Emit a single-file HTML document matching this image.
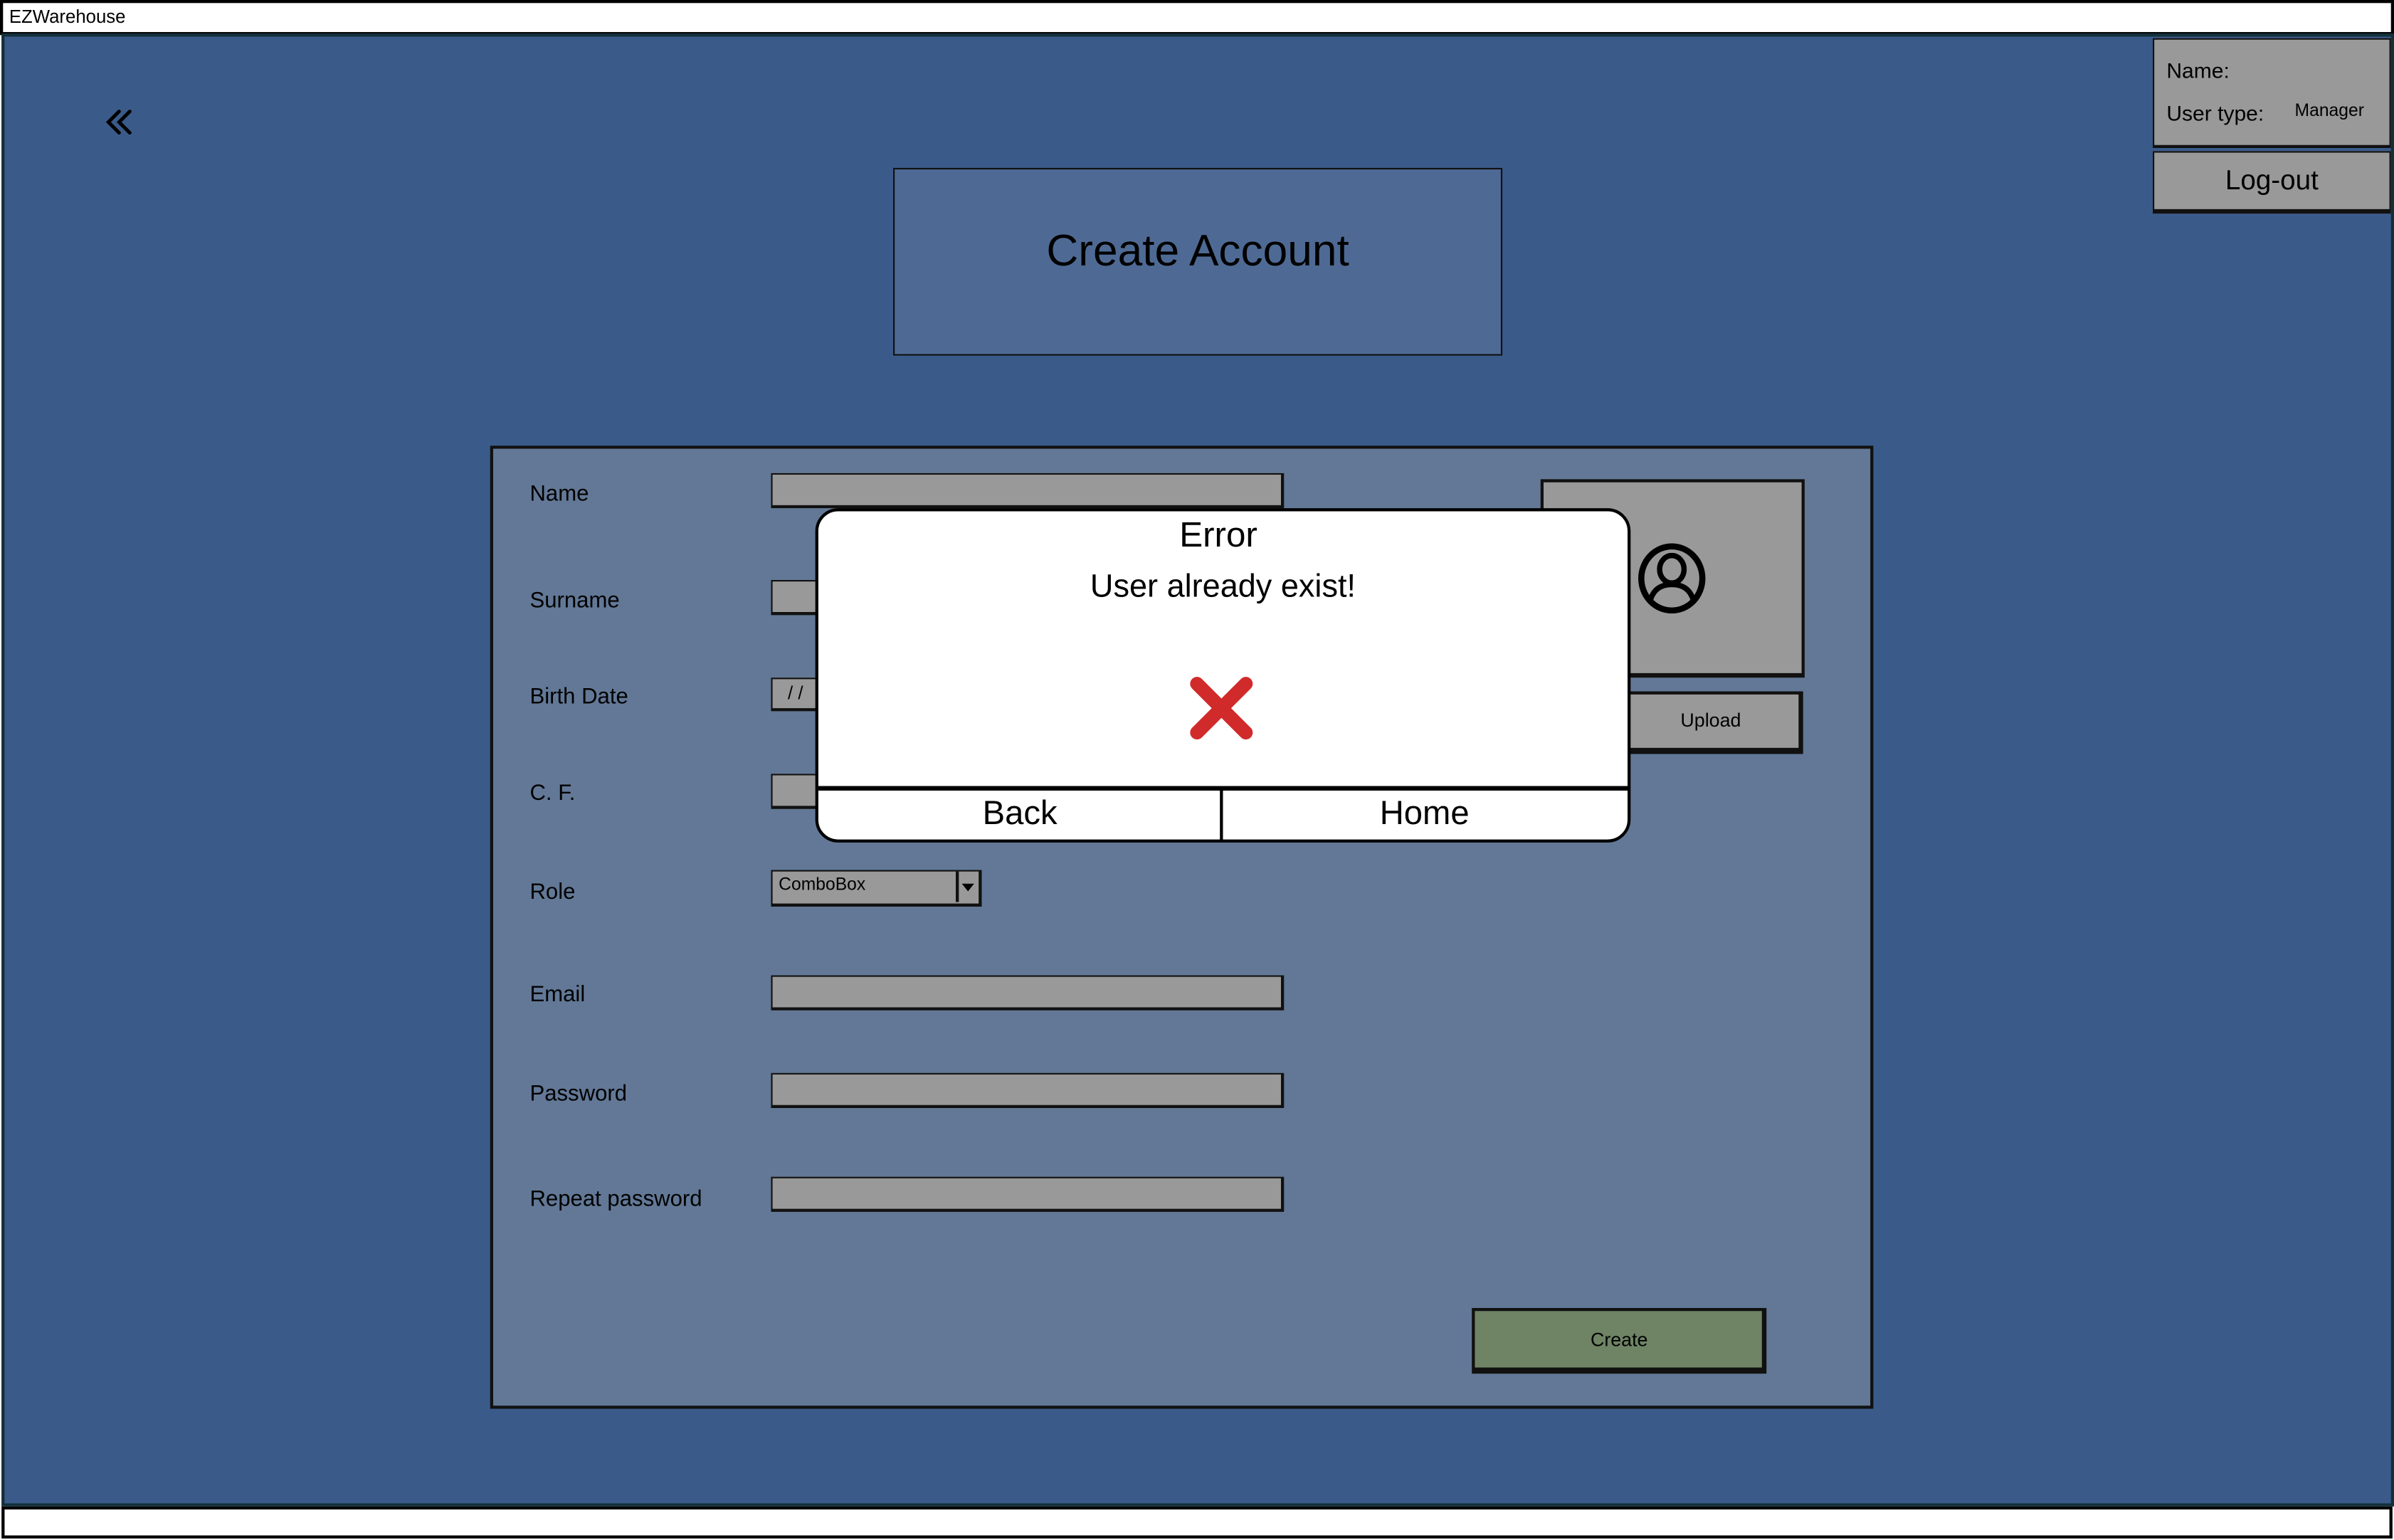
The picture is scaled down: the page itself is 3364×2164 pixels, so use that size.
<!DOCTYPE html>
<html><head><meta charset="utf-8"><style>
html,body{margin:0;padding:0;width:3364px;height:2164px;overflow:hidden;background:#fff;}
#w{position:absolute;left:0;top:0;width:1568px;height:1009px;transform:scale(2.14541,2.14470);transform-origin:0 0;font-family:"Liberation Sans",sans-serif;color:#000;}
.a{position:absolute;box-sizing:border-box;}
.in{position:absolute;box-sizing:border-box;background:#999;border:1.5px solid #111;border-bottom-width:2.5px;border-right-width:2px;}
.lb{position:absolute;left:347px;font-size:14.5px;line-height:16px;}
.t{position:absolute;white-space:nowrap;}
</style></head><body><div id="w">
<div class="a" style="left:0;top:0;width:1568px;height:23px;background:#fff;border:2px solid #000;"></div>
<div class="t" style="left:6px;top:4px;font-size:12px;">EZWarehouse</div>
<div class="a" style="left:1px;top:22px;width:1567px;height:965px;background:#3a5b8a;border:2px solid #12303a;"></div>
<div class="a" style="left:1px;top:987px;width:1566px;height:21px;background:#fff;border:2px solid #000;"></div>
<svg class="a" style="left:68px;top:70px" width="22" height="20" viewBox="0 0 22 20"><path d="M10 3 L3 10 L10 17 M17 3 L10 10 L17 17" fill="none" stroke="#000" stroke-width="2.3" stroke-linecap="round"/></svg>
<div class="a" style="left:585px;top:110px;width:399px;height:123px;background:#4e6a94;border:1.5px solid #111;"></div>
<div class="t" style="left:585px;width:399px;text-align:center;top:149px;font-size:29px;">Create Account</div>
<div class="a" style="left:1410px;top:25px;width:156px;height:72px;background:#999;border:1.5px solid #111;border-bottom-width:2.5px;"></div>
<div class="t" style="left:1419px;top:38px;font-size:14px;">Name:</div>
<div class="t" style="left:1419px;top:66px;font-size:14px;">User type:</div>
<div class="t" style="left:1503px;top:67px;font-size:11.5px;">Manager</div>
<div class="a" style="left:1410px;top:99px;width:156px;height:41px;background:#999;border:1.5px solid #111;border-bottom-width:3px;"></div>
<div class="t" style="left:1410px;width:156px;text-align:center;top:108px;font-size:18px;">Log-out</div>
<div class="a" style="left:321px;top:292px;width:906px;height:631px;background:#627896;border:2px solid #111;"></div>
<div class="lb" style="top:316px">Name</div>
<div class="lb" style="top:386px">Surname</div>
<div class="lb" style="top:449px">Birth Date</div>
<div class="lb" style="top:512px">C. F.</div>
<div class="lb" style="top:577px">Role</div>
<div class="lb" style="top:644px">Email</div>
<div class="lb" style="top:709px">Password</div>
<div class="lb" style="top:778px">Repeat password</div>
<div class="in" style="left:505px;top:310px;width:336px;height:23px"></div>
<div class="in" style="left:505px;top:380px;width:336px;height:23px"></div>
<div class="in" style="left:505px;top:444px;width:336px;height:22px"><span style="position:absolute;left:10px;top:2px;font-size:12px">/ /</span></div>
<div class="in" style="left:505px;top:507px;width:336px;height:23px"></div>
<div class="in" style="left:505px;top:639px;width:336px;height:23px"></div>
<div class="in" style="left:505px;top:703px;width:336px;height:23px"></div>
<div class="in" style="left:505px;top:771px;width:336px;height:23px"></div>
<div class="in" style="left:505px;top:570px;width:138px;height:24px"><span style="position:absolute;left:4px;top:3px;font-size:11.5px">ComboBox</span><div class="a" style="left:120px;top:0;width:1.5px;height:20px;background:#111"></div><div class="a" style="left:124px;top:8px;width:0;height:0;border-left:4px solid transparent;border-right:4px solid transparent;border-top:5px solid #000"></div></div>
<div class="a" style="left:1009px;top:314px;width:173px;height:130px;background:#999;border:2px solid #111;border-bottom-width:3px;"></div>
<svg class="a" style="left:1072px;top:356px" width="46" height="46" viewBox="0 0 46 46"><ellipse cx="23" cy="23" rx="20" ry="21" fill="none" stroke="#000" stroke-width="4"/><ellipse cx="23" cy="17" rx="8" ry="9" fill="none" stroke="#000" stroke-width="3.5"/><path d="M9 37 Q12 27 23 27 Q34 27 37 37" fill="none" stroke="#000" stroke-width="3.5"/></svg>
<div class="a" style="left:1060px;top:453px;width:121px;height:41px;background:#999;border:2px solid #111;border-bottom-width:4px;border-right-width:3px;"></div>
<div class="t" style="left:1060px;width:121px;text-align:center;top:465px;font-size:12.5px;">Upload</div>
<div class="a" style="left:964px;top:857px;width:193px;height:43px;background:#6e8465;border:2px solid #111;border-bottom-width:4px;border-right-width:3px;"></div>
<div class="t" style="left:964px;width:193px;text-align:center;top:871px;font-size:12.5px;">Create</div>
<div class="a" style="left:534px;top:333px;width:534px;height:219px;background:#fff;border:2px solid #000;border-radius:15px;"></div>
<div class="t" style="left:534px;width:528px;text-align:center;top:337px;font-size:23px;">Error</div>
<div class="t" style="left:534px;width:534px;text-align:center;top:373px;font-size:21px;">User already exist!</div>
<svg class="a" style="left:779px;top:443px" width="42" height="42" viewBox="0 0 42 42"><path d="M5 5 L37 37 M37 5 L5 37" stroke="#d12a2a" stroke-width="9" stroke-linecap="round"/></svg>
<div class="a" style="left:536px;top:515px;width:530px;height:2.5px;background:#000;"></div>
<div class="a" style="left:799px;top:516px;width:1.5px;height:35px;background:#000;"></div>
<div class="t" style="left:536px;width:264px;text-align:center;top:520px;font-size:22px;">Back</div>
<div class="t" style="left:800px;width:266px;text-align:center;top:520px;font-size:22px;">Home</div>
</div></body></html>
